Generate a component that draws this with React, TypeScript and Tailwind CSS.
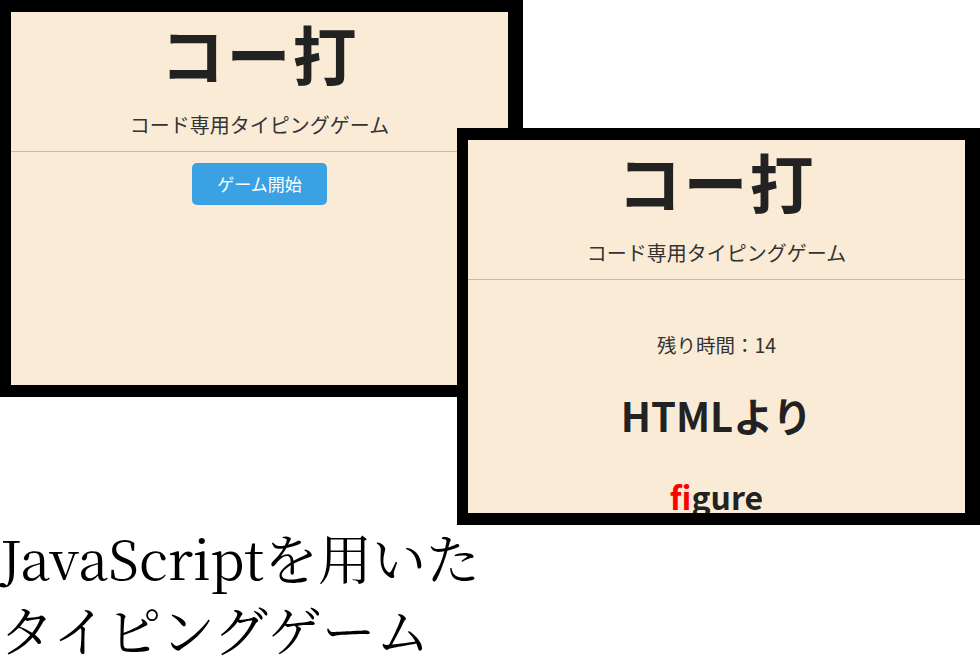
import type { ReactNode } from "react";

const SANS = "font-['Noto_Sans_CJK_JP','Noto_Sans',sans-serif]";

// one framed screenshot of the game page
function Shot({ children }: { children: ReactNode }) {
  return (
    <div className="w-[523px] h-[397px] border-black border-l-[11px] border-t-[12px] border-r-[15px] border-b-[12px] bg-black">
      <div className={`h-full bg-[#faebd7] overflow-hidden flex flex-col items-center text-[#333] ${SANS}`}>
        <h1 className="text-[64px] leading-[80px] font-bold text-[#222] tracking-[2px]">コー打</h1>
        <p className="mt-[19px] text-[20px] leading-[28px]">コード専用タイピングゲーム</p>
        <hr className="mt-[12px] w-full border-0 border-t border-[#bdbdbd]" />
        {children}
      </div>
    </div>
  );
}

export default function App() {
  return (
    <div className="w-[980px] h-[668px] bg-white overflow-hidden">
      <div className="relative h-[525px]">
        <Shot>
          <button className="mt-[11px] w-[135px] h-[42px] rounded-[5px] bg-[#3aa2e3] text-white text-[17px]">
            ゲーム開始
          </button>
        </Shot>

        {/* second screenshot laid over the first */}
        <div className="absolute left-[457px] top-[128px]">
          <Shot>
            <p className="mt-[51px] text-[19.5px] leading-[28px]">残り時間：14</p>
            <p className="mt-[32px] text-[40px] leading-[48px] font-bold text-[#222]">HTMLより</p>
            <p className="mt-[37px] text-[32px] leading-[40px] font-bold text-[#222]">
              <span className="text-[#ff0000]">fi</span>gure
            </p>
          </Shot>
        </div>
      </div>

      <div className="text-[54px] leading-[72px] text-black font-['Noto_Serif_CJK_JP','Liberation_Serif','Noto_Sans_CJK_JP',serif] -mt-[4px]">
        <div>JavaScriptを用いた</div>
        <div>タイピングゲーム</div>
      </div>
    </div>
  );
}
